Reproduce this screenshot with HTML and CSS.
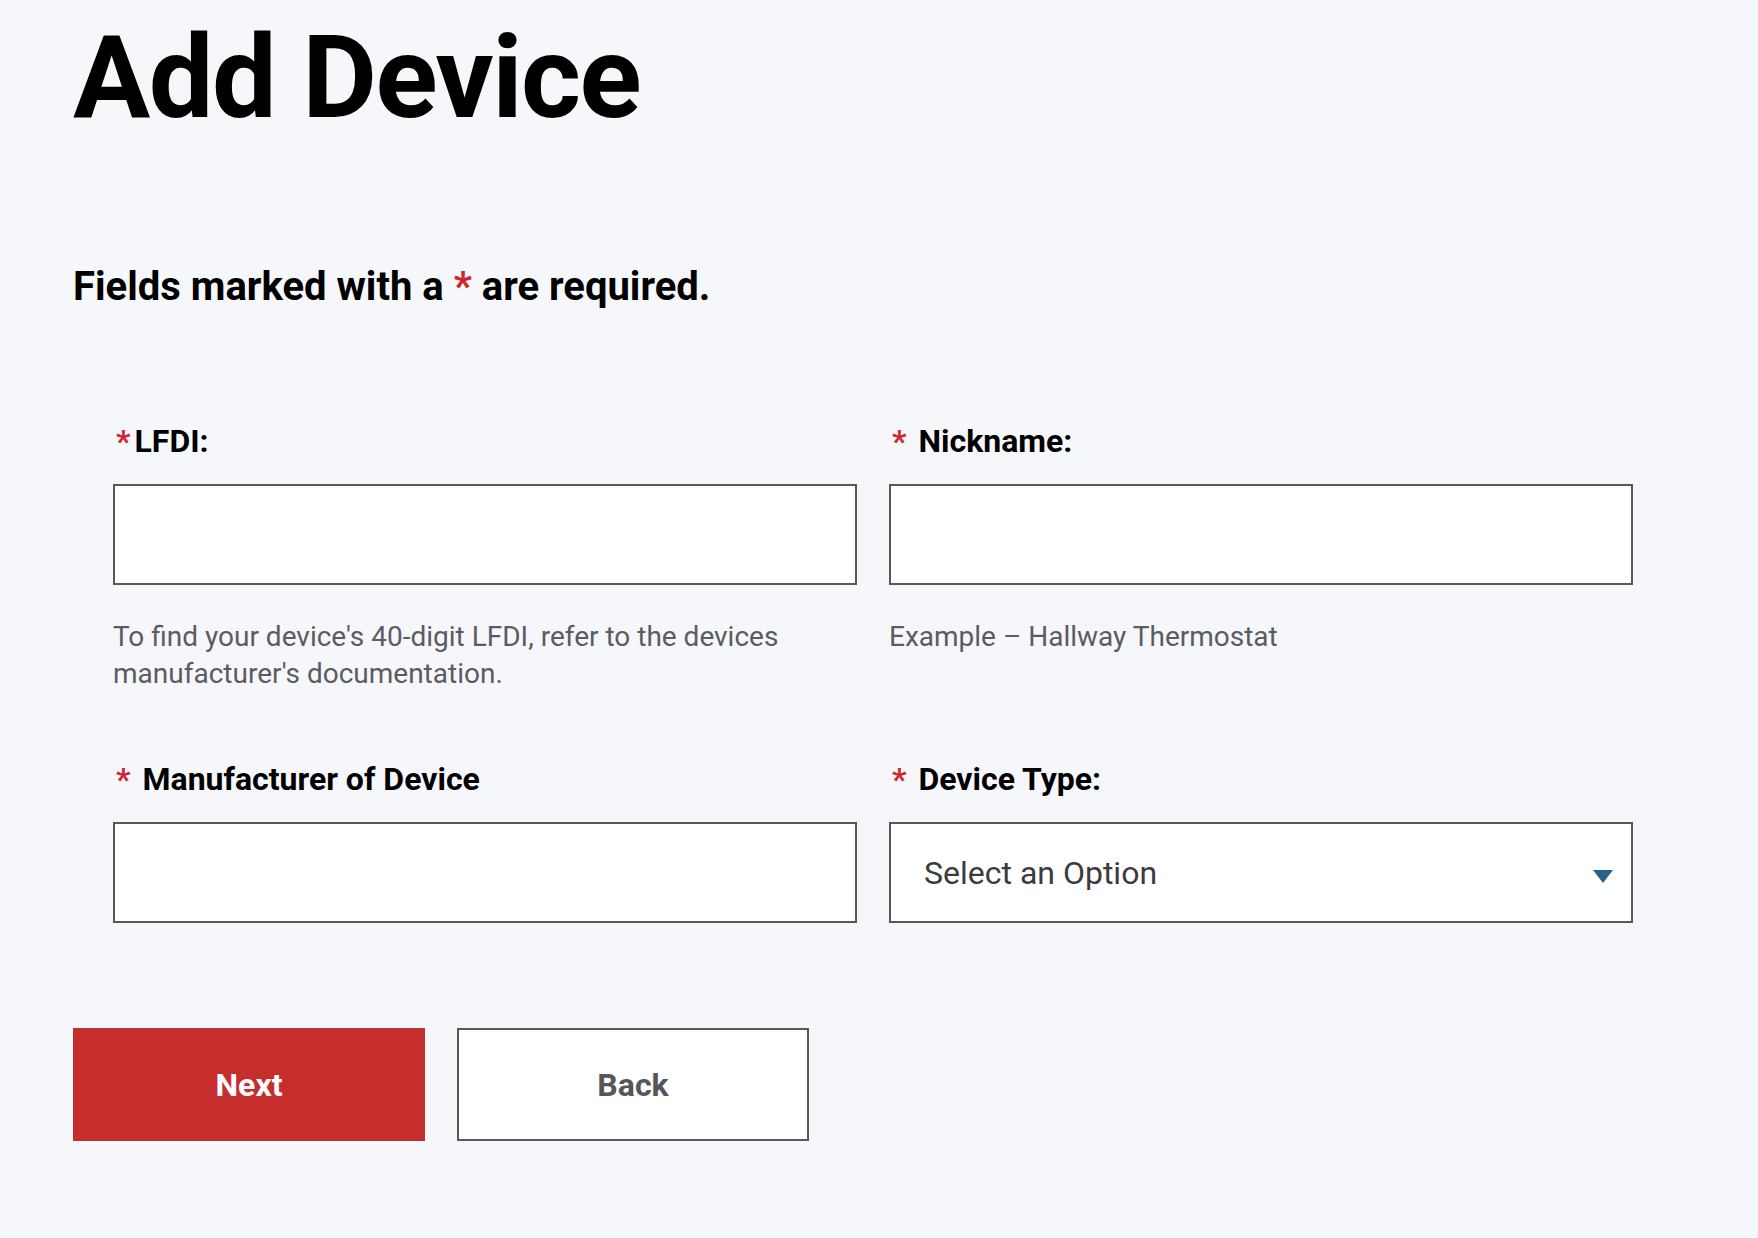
FILE: index.html
```html
<!DOCTYPE html>
<html lang="en">
<head>
<meta charset="utf-8">
<title>Add Device</title>
<link rel="stylesheet" href="styles.css">
</head>
<body>
<main class="page">
  <h1 class="page-title">Add Device</h1>
  <p class="required-note">Fields marked with a <span class="req">*</span> are required.</p>

  <form class="device-form">
    <div class="form-grid">
      <div class="field">
        <label class="field-label" for="lfdi"><span class="req">*</span>LFDI:</label>
        <input class="text-input" id="lfdi" type="text">
        <p class="help">To find your device's 40-digit LFDI, refer to the devices manufacturer's documentation.</p>
      </div>
      <div class="field">
        <label class="field-label" for="nickname"><span class="req">*</span> Nickname:</label>
        <input class="text-input" id="nickname" type="text">
        <p class="help">Example – Hallway Thermostat</p>
      </div>
      <div class="field">
        <label class="field-label" for="manufacturer"><span class="req">*</span> Manufacturer of Device</label>
        <input class="text-input" id="manufacturer" type="text">
      </div>
      <div class="field">
        <label class="field-label" for="type"><span class="req">*</span> Device Type:</label>
        <div class="select-wrap">
          <select class="select-input" id="type">
            <option>Select an Option</option>
          </select>
          <svg class="select-arrow" width="20" height="13" viewBox="0 0 20 13" aria-hidden="true"><path d="M0 0 H20 L10 13 Z" fill="#2a6189"/></svg>
        </div>
      </div>
    </div>

    <div class="actions">
      <button type="button" class="btn btn-primary">Next</button>
      <button type="button" class="btn btn-secondary">Back</button>
    </div>
  </form>
</main>
</body>
</html>
```

FILE: styles.css
```css
* { box-sizing: border-box; }

html, body {
  margin: 0;
  padding: 0;
}

body {
  background: #f6f7fb;
  font-family: Roboto, "Liberation Sans", Arial, sans-serif;
  color: #000;
}

.page {
  padding: 20px 0 60px 73px;
}

.page-title {
  margin: 0;
  font-size: 115px;
  line-height: 115px;
  font-weight: 700;
  letter-spacing: -1.5px;
}

.required-note {
  margin: 130px 0 0;
  font-size: 40px;
  line-height: 44px;
  font-weight: 700;
}

.req {
  color: #d0262d;
}

.device-form {
  margin-top: 112px;
}

.form-grid {
  display: grid;
  grid-template-columns: 744px 744px;
  column-gap: 32px;
  row-gap: 67px;
  padding-left: 40px;
}

.field {
  display: flex;
  flex-direction: column;
}

.field-label {
  display: block;
  padding-left: 3px;
  font-size: 32px;
  line-height: 40px;
  font-weight: 700;
  margin-bottom: 23px;
}

.field-label .req {
  margin-right: 4px;
}

.text-input,
.select-input {
  display: block;
  width: 100%;
  height: 101px;
  margin: 0;
  background: #fff;
  border: 2px solid #58585b;
  border-radius: 0;
  font-family: inherit;
  font-size: 32px;
  outline: none;
}

.text-input {
  padding: 0 33px;
}

.help {
  margin: 33px 0 0;
  font-size: 28px;
  line-height: 37px;
  color: #5b5c60;
}

.select-wrap {
  position: relative;
}

.select-input {
  appearance: none;
  -webkit-appearance: none;
  padding: 0 60px 0 33px;
  color: #3b3b3d;
}

.select-arrow {
  position: absolute;
  right: 20px;
  top: 48px;
  pointer-events: none;
}

.actions {
  display: flex;
  gap: 32px;
  margin-top: 105px;
}

.btn {
  width: 352px;
  height: 113px;
  font-family: inherit;
  font-size: 32px;
  font-weight: 700;
  border-radius: 0;
  cursor: pointer;
}

.btn-primary {
  background: #c62d2d;
  color: #fff;
  border: none;
}

.btn-secondary {
  background: #fff;
  color: #55565a;
  border: 2px solid #58585b;
}
```
